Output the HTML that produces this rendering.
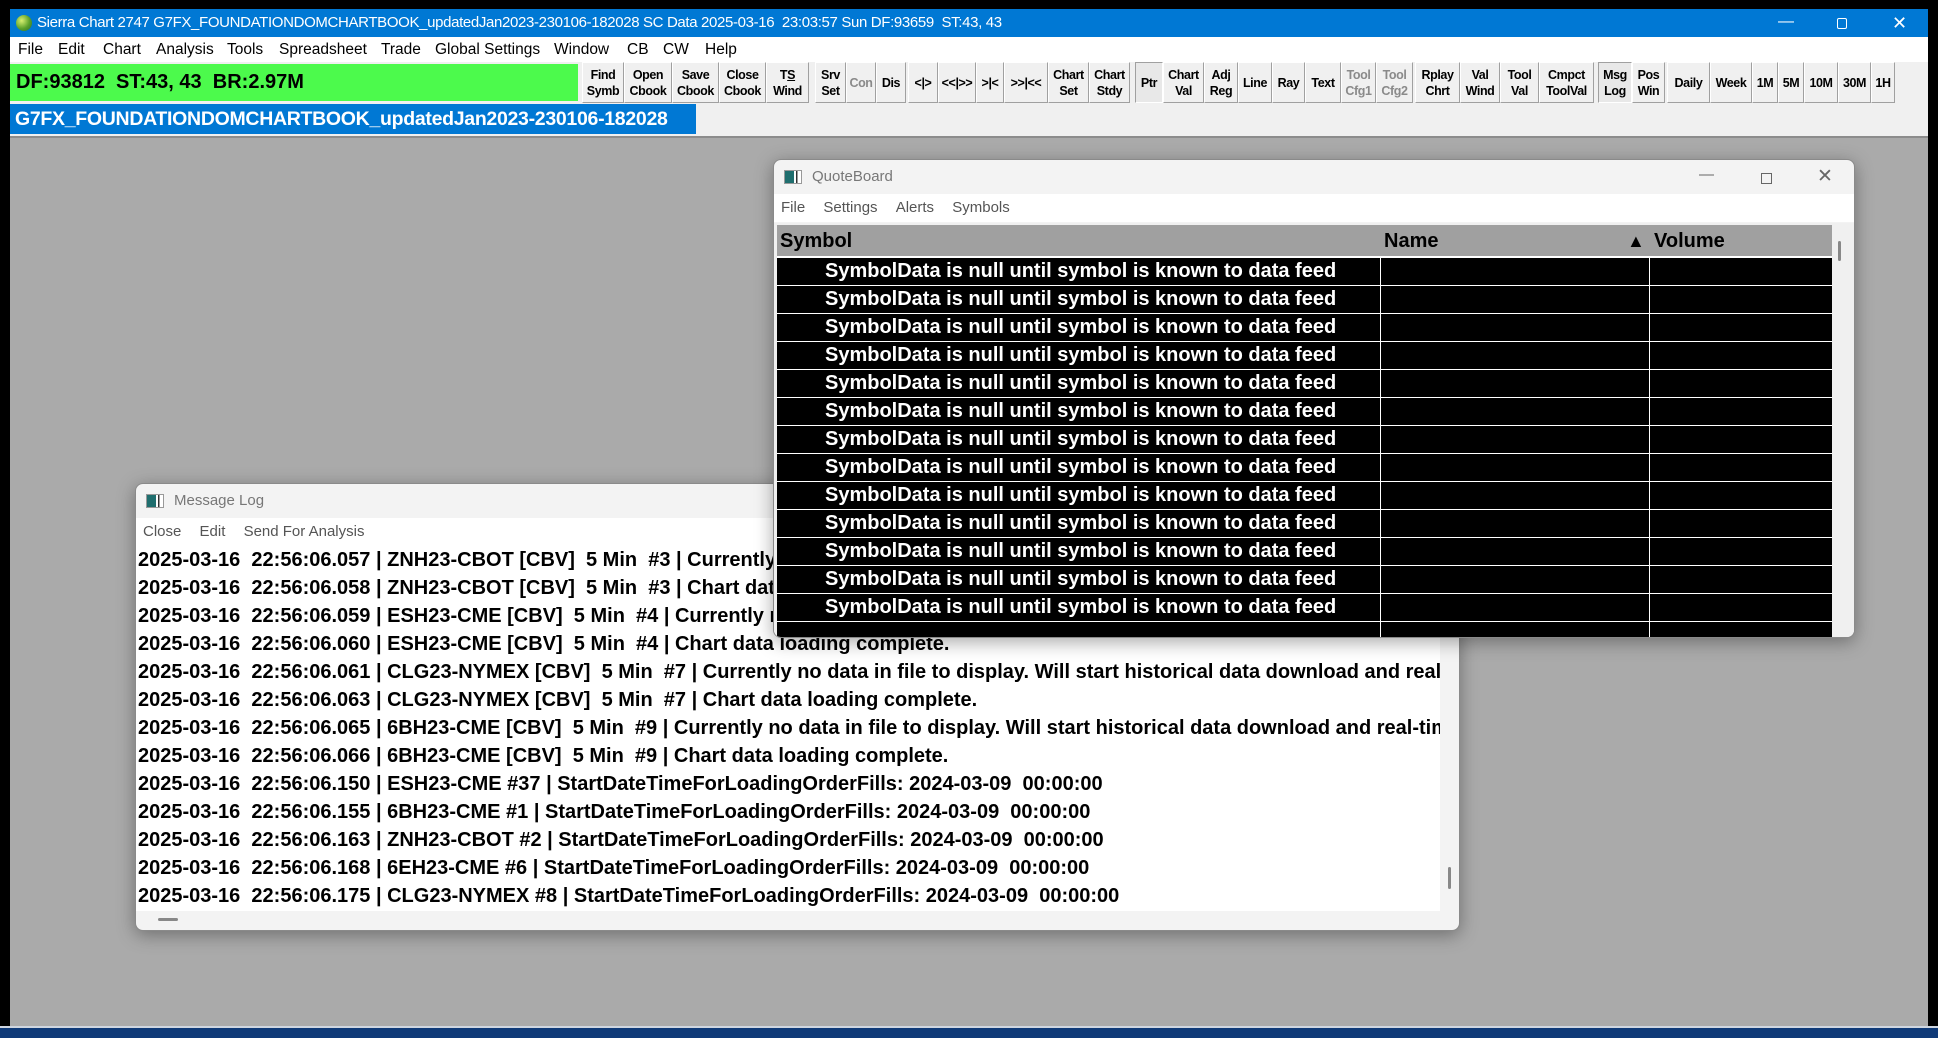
<!DOCTYPE html>
<html><head><meta charset="utf-8">
<style>
*{box-sizing:border-box;margin:0;padding:0}
body{width:1938px;height:1038px;overflow:hidden;background:#000;font-family:"Liberation Sans",Arial,sans-serif;position:relative}
.abs{position:absolute}
#title{left:10px;top:9px;width:1918px;height:28px;background:#0078d4;color:#fff;font-size:15px;line-height:28px;letter-spacing:-0.35px;white-space:nowrap}
#menu{left:10px;top:37px;width:1918px;height:25px;background:#fff;font-size:15.5px;line-height:25px;color:#000}
#menu span{position:absolute;top:0}
#tb{left:10px;top:62px;width:1918px;height:42px;background:#f0f0f0}
#green{left:10px;top:64px;width:568px;height:37px;background:#4cfa4c;font-weight:bold;font-size:20px;line-height:37px;padding-left:6px;white-space:pre}
.btn{position:absolute;top:62px;height:41px;background:#f0f0f0;border:1px solid #fff;border-right-color:#a0a0a0;border-bottom-color:#a0a0a0;font-weight:bold;font-size:12.5px;letter-spacing:-0.4px;line-height:16px;text-align:center;display:flex;align-items:center;justify-content:center;white-space:nowrap;overflow:visible}
.dis{color:#8a8a8a}
#tabrow{left:10px;top:104px;width:1918px;height:32px;background:#f0f0f0}
#tab{left:10px;top:104px;width:686px;height:30px;background:#0078d4;color:#fff;font-weight:bold;font-size:19.5px;letter-spacing:-0.3px;line-height:30px;padding-left:5px;white-space:nowrap;overflow:hidden}
#ws{left:10px;top:136px;width:1918px;height:890px;background:#aaaaaa;border-top:2px solid #8c8c8c}
#tbar{left:0;top:1026px;width:1938px;height:12px;background:#0f3a78;border-top:2px solid #cfd6e0}
.win{position:absolute;background:#f3f3f3;border:1px solid #8a8a8a;border-radius:8px;overflow:hidden;box-shadow:0 4px 18px rgba(0,0,0,.35)}
.wt{position:absolute;left:0;top:0;right:0;height:34px;color:#777;font-size:15px;line-height:34px;padding-left:38px}
.ico{position:absolute;left:10px;top:10px;width:18px;height:14px;border:1px solid #999;background:linear-gradient(90deg,#1f6e6e 0 55%,#fff 55% 70%,#333 70% 78%,#fff 78%)}
.wm{position:absolute;left:0;right:0;height:28px;background:#fff;font-size:15px;color:#555;line-height:28px}
.wm span{margin-left:7px;margin-right:7px}
.row{position:absolute;left:3px;width:1055px;height:28px;background:#000;border-bottom:1px solid #fff;color:#fff;font-weight:bold;font-size:20px;line-height:26px}
.row .s{position:absolute;left:48px;top:0}
.row .c1{position:absolute;left:603px;top:0;width:1px;height:28px;background:#fff}
.row .c2{position:absolute;left:872px;top:0;width:1px;height:28px;background:#fff}
.ml{position:absolute;left:2px;font-weight:bold;font-size:20px;line-height:28px;white-space:pre;color:#000}
</style></head><body>
<div id="title" class="abs">
 <div class="abs" style="left:6px;top:6px;width:16px;height:16px;border-radius:50%;background:radial-gradient(circle at 35% 35%,#d8f070,#5aa02a 55%,#2a6a30)"></div>
 <span class="abs" style="left:27px;top:0">Sierra Chart 2747 G7FX_FOUNDATIONDOMCHARTBOOK_updatedJan2023-230106-182028 SC Data 2025-03-16&nbsp; 23:03:57 Sun DF:93659&nbsp; ST:43, 43</span>
 <span class="abs" style="left:1768px;top:-1px;font-size:16px">&#8212;</span>
 <div class="abs" style="left:1827px;top:9px;width:10px;height:11px;border:1.5px solid #fff;border-radius:2px"></div>
 <span class="abs" style="left:1882px;top:0;font-size:18px">&#10005;</span>
</div>
<div id="menu" class="abs">
 <span style="left:8px">File</span><span style="left:48px">Edit</span><span style="left:93px">Chart</span><span style="left:146px">Analysis</span><span style="left:217px">Tools</span><span style="left:269px">Spreadsheet</span><span style="left:371px">Trade</span><span style="left:425px">Global Settings</span><span style="left:544px">Window</span><span style="left:617px">CB</span><span style="left:653px">CW</span><span style="left:695px">Help</span>
</div>
<div id="tb" class="abs"></div>
<div id="green" class="abs">DF:93812  ST:43, 43  BR:2.97M</div>
<div class="btn" style="left:582px;width:42px"><span>Find<br>Symb</span></div>
<div class="btn" style="left:624px;width:48px"><span>Open<br>Cbook</span></div>
<div class="btn" style="left:672px;width:47px"><span>Save<br>Cbook</span></div>
<div class="btn" style="left:719px;width:47px"><span>Close<br>Cbook</span></div>
<div class="btn" style="left:766px;width:43px"><span>T<u>S</u><br>Wind</span></div>
<div class="btn" style="left:815px;width:31px"><span>Srv<br>Set</span></div>
<div class="btn dis" style="left:846px;width:30px">Con</div>
<div class="btn" style="left:876px;width:30px">Dis</div>
<div class="btn" style="left:908px;width:30px">&lt;|&gt;</div>
<div class="btn" style="left:938px;width:38px">&lt;&lt;|&gt;&gt;</div>
<div class="btn" style="left:976px;width:28px">&gt;|&lt;</div>
<div class="btn" style="left:1004px;width:44px">&gt;&gt;|&lt;&lt;</div>
<div class="btn" style="left:1048px;width:41px"><span>Chart<br>Set</span></div>
<div class="btn" style="left:1089px;width:41px"><span>Chart<br>Stdy</span></div>
<div class="btn" style="left:1135px;width:28px;border-color:#a0a0a0 #fff #fff #a0a0a0;background:#e8e8e8">Ptr</div>
<div class="btn" style="left:1163px;width:41px"><span>Chart<br>Val</span></div>
<div class="btn" style="left:1204px;width:34px"><span>Adj<br>Reg</span></div>
<div class="btn" style="left:1238px;width:34px">Line</div>
<div class="btn" style="left:1272px;width:33px">Ray</div>
<div class="btn" style="left:1305px;width:36px">Text</div>
<div class="btn dis" style="left:1341px;width:35px"><span>Tool<br>Cfg1</span></div>
<div class="btn dis" style="left:1376px;width:37px"><span>Tool<br>Cfg2</span></div>
<div class="btn" style="left:1415px;width:45px"><span>Rplay<br>Chrt</span></div>
<div class="btn" style="left:1460px;width:40px"><span>Val<br>Wind</span></div>
<div class="btn" style="left:1500px;width:39px"><span>Tool<br>Val</span></div>
<div class="btn" style="left:1539px;width:55px"><span>Cmpct<br>ToolVal</span></div>
<div class="btn" style="left:1598px;width:34px;border-color:#a0a0a0 #fff #fff #a0a0a0;background:#e8e8e8"><span>Msg<br>Log</span></div>
<div class="btn" style="left:1632px;width:33px"><span>Pos<br>Win</span></div>
<div class="btn" style="left:1667px;width:43px">Daily</div>
<div class="btn" style="left:1710px;width:42px">Week</div>
<div class="btn" style="left:1752px;width:26px">1M</div>
<div class="btn" style="left:1778px;width:26px">5M</div>
<div class="btn" style="left:1804px;width:34px">10M</div>
<div class="btn" style="left:1838px;width:33px">30M</div>
<div class="btn" style="left:1871px;width:24px">1H</div>
<div id="tabrow" class="abs"></div>
<div id="tab" class="abs">G7FX_FOUNDATIONDOMCHARTBOOK_updatedJan2023-230106-182028</div>
<div id="ws" class="abs"></div>
<div id="tbar" class="abs"></div>

<!-- Message Log -->
<div class="win" style="left:135px;top:483px;width:1325px;height:448px">
 <div class="ico"></div>
 <div class="wt">Message Log</div>
 <div class="wm" style="top:34px"><span>Close</span> <span>Edit</span> <span>Send For Analysis</span></div>
 <div class="abs" style="left:0;top:62px;width:1304px;height:365px;background:#fff;overflow:hidden">
  <div class="ml" style="top:0">2025-03-16  22:56:06.057 | ZNH23-CBOT [CBV]  5 Min  #3 | Currently no data in file to display. Will start historical data download and real-time</div>
  <div class="ml" style="top:28px">2025-03-16  22:56:06.058 | ZNH23-CBOT [CBV]  5 Min  #3 | Chart data loading complete.</div>
  <div class="ml" style="top:56px">2025-03-16  22:56:06.059 | ESH23-CME [CBV]  5 Min  #4 | Currently no data in file to display. Will start historical data download and real-time</div>
  <div class="ml" style="top:84px">2025-03-16  22:56:06.060 | ESH23-CME [CBV]  5 Min  #4 | Chart data loading complete.</div>
  <div class="ml" style="top:112px">2025-03-16  22:56:06.061 | CLG23-NYMEX [CBV]  5 Min  #7 | Currently no data in file to display. Will start historical data download and real-time</div>
  <div class="ml" style="top:140px">2025-03-16  22:56:06.063 | CLG23-NYMEX [CBV]  5 Min  #7 | Chart data loading complete.</div>
  <div class="ml" style="top:168px">2025-03-16  22:56:06.065 | 6BH23-CME [CBV]  5 Min  #9 | Currently no data in file to display. Will start historical data download and real-time</div>
  <div class="ml" style="top:196px">2025-03-16  22:56:06.066 | 6BH23-CME [CBV]  5 Min  #9 | Chart data loading complete.</div>
  <div class="ml" style="top:224px">2025-03-16  22:56:06.150 | ESH23-CME #37 | StartDateTimeForLoadingOrderFills: 2024-03-09  00:00:00</div>
  <div class="ml" style="top:252px">2025-03-16  22:56:06.155 | 6BH23-CME #1 | StartDateTimeForLoadingOrderFills: 2024-03-09  00:00:00</div>
  <div class="ml" style="top:280px">2025-03-16  22:56:06.163 | ZNH23-CBOT #2 | StartDateTimeForLoadingOrderFills: 2024-03-09  00:00:00</div>
  <div class="ml" style="top:308px">2025-03-16  22:56:06.168 | 6EH23-CME #6 | StartDateTimeForLoadingOrderFills: 2024-03-09  00:00:00</div>
  <div class="ml" style="top:336px">2025-03-16  22:56:06.175 | CLG23-NYMEX #8 | StartDateTimeForLoadingOrderFills: 2024-03-09  00:00:00</div>
 </div>
 <div class="abs" style="left:1312px;top:383px;width:3px;height:22px;background:#888;border-radius:2px"></div>
 <div class="abs" style="left:22px;top:434px;width:20px;height:3px;background:#888;border-radius:2px"></div>
</div>

<!-- QuoteBoard -->
<div class="win" style="left:773px;top:159px;width:1082px;height:479px">
 <div class="ico"></div>
 <div class="wt">QuoteBoard</div>
 <span class="abs" style="left:925px;top:6px;color:#666;font-size:15px">&#8212;</span>
 <div class="abs" style="left:987px;top:13px;width:11px;height:11px;border:1px solid #666"></div>
 <span class="abs" style="left:1043px;top:5px;color:#666;font-size:19px">&#10005;</span>
 <div class="wm" style="top:34px"><span>File</span> <span>Settings</span> <span>Alerts</span> <span>Symbols</span></div>
 <div class="abs" style="left:0;top:63px;width:1082px;height:416px;background:#f0f0f0;overflow:hidden">
  <div class="abs" style="left:3px;top:2px;width:1055px;height:33px;background:#a0a0a0;border-bottom:2px solid #fff;font-weight:bold;font-size:20px;line-height:32px">
   <span class="abs" style="left:3px">Symbol</span>
   <span class="abs" style="left:607px">Name</span>
   <span class="abs" style="left:850px;font-size:18px">&#9650;</span>
   <span class="abs" style="left:877px">Volume</span>
  </div>
  <div class="row" style="top:35px"><span class="s">SymbolData is null until symbol is known to data feed</span><i class="c1"></i><i class="c2"></i></div>
  <div class="row" style="top:63px"><span class="s">SymbolData is null until symbol is known to data feed</span><i class="c1"></i><i class="c2"></i></div>
  <div class="row" style="top:91px"><span class="s">SymbolData is null until symbol is known to data feed</span><i class="c1"></i><i class="c2"></i></div>
  <div class="row" style="top:119px"><span class="s">SymbolData is null until symbol is known to data feed</span><i class="c1"></i><i class="c2"></i></div>
  <div class="row" style="top:147px"><span class="s">SymbolData is null until symbol is known to data feed</span><i class="c1"></i><i class="c2"></i></div>
  <div class="row" style="top:175px"><span class="s">SymbolData is null until symbol is known to data feed</span><i class="c1"></i><i class="c2"></i></div>
  <div class="row" style="top:203px"><span class="s">SymbolData is null until symbol is known to data feed</span><i class="c1"></i><i class="c2"></i></div>
  <div class="row" style="top:231px"><span class="s">SymbolData is null until symbol is known to data feed</span><i class="c1"></i><i class="c2"></i></div>
  <div class="row" style="top:259px"><span class="s">SymbolData is null until symbol is known to data feed</span><i class="c1"></i><i class="c2"></i></div>
  <div class="row" style="top:287px"><span class="s">SymbolData is null until symbol is known to data feed</span><i class="c1"></i><i class="c2"></i></div>
  <div class="row" style="top:315px"><span class="s">SymbolData is null until symbol is known to data feed</span><i class="c1"></i><i class="c2"></i></div>
  <div class="row" style="top:343px"><span class="s">SymbolData is null until symbol is known to data feed</span><i class="c1"></i><i class="c2"></i></div>
  <div class="row" style="top:371px"><span class="s">SymbolData is null until symbol is known to data feed</span><i class="c1"></i><i class="c2"></i></div>
  <div class="row" style="top:399px"><i class="c1"></i><i class="c2"></i></div>
  <div class="abs" style="left:1064px;top:18px;width:3px;height:20px;background:#888;border-radius:2px"></div>
 </div>
</div>
</body></html>
